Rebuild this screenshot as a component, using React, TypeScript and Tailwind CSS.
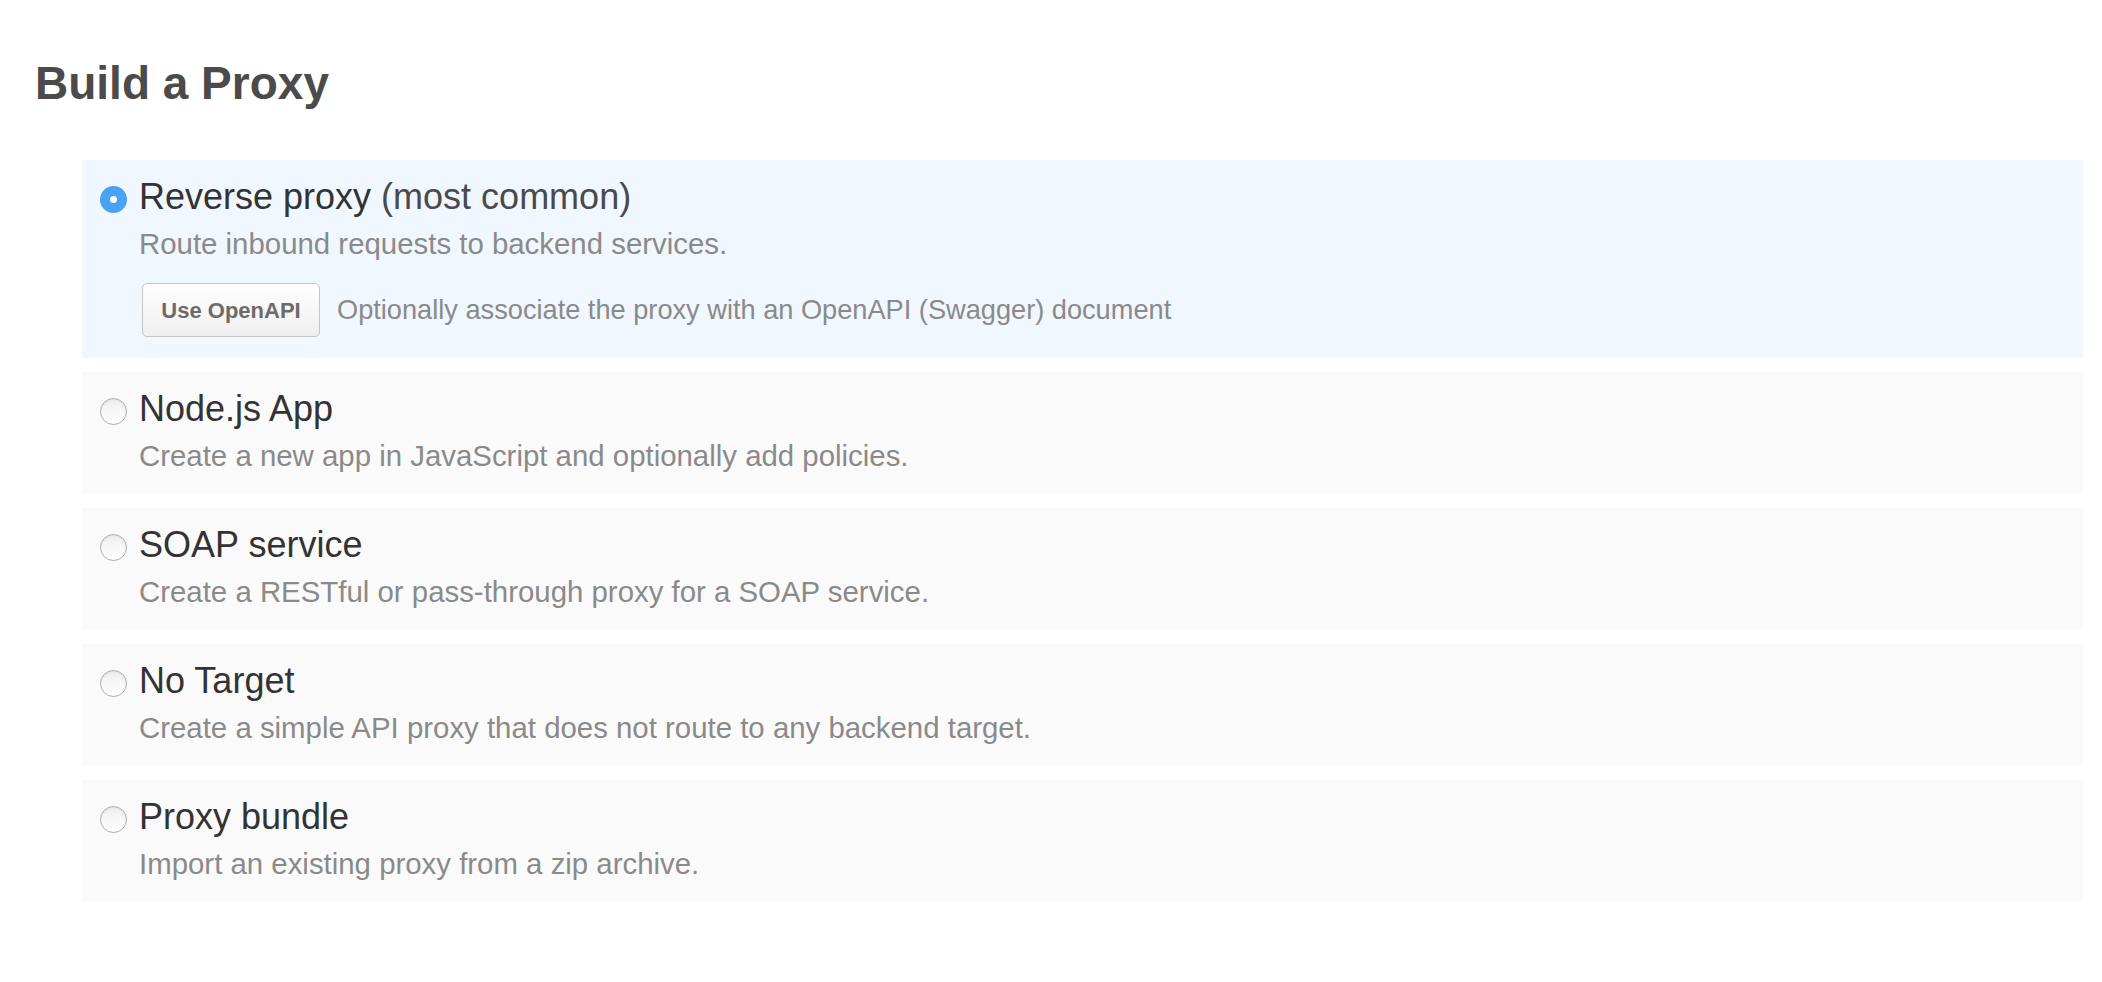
import React from "react";

type Opt = {
  title: string;
  suffix?: string;
  desc: string;
  checked?: boolean;
  openapi?: boolean;
};

const options: Opt[] = [
  {
    title: "Reverse proxy",
    suffix: "(most common)",
    desc: "Route inbound requests to backend services.",
    checked: true,
    openapi: true,
  },
  { title: "Node.js App", desc: "Create a new app in JavaScript and optionally add policies." },
  { title: "SOAP service", desc: "Create a RESTful or pass-through proxy for a SOAP service." },
  { title: "No Target", desc: "Create a simple API proxy that does not route to any backend target." },
  { title: "Proxy bundle", desc: "Import an existing proxy from a zip archive." },
];

function Radio({ checked }: { checked?: boolean }) {
  if (checked) {
    return (
      <div className="mt-[9px] flex h-[27px] w-[27px] shrink-0 items-center justify-center rounded-full bg-[#4aa2f6]">
        <div className="h-[7px] w-[7px] rounded-full bg-white" />
      </div>
    );
  }
  return (
    <div className="mt-[9px] h-[27px] w-[27px] shrink-0 rounded-full border border-[#acacac] bg-gradient-to-b from-[#f0f0f0] to-white shadow-[inset_0_1px_2px_rgba(0,0,0,0.08)]" />
  );
}

export default function App() {
  return (
    <div
      className="min-h-screen bg-white pb-10"
      style={{ fontFamily: '"Liberation Sans", Arial, sans-serif' }}
    >
      <h1 className="pl-[35px] pt-[60px] text-[46px] font-bold leading-[46px] tracking-[0px] text-[#4b4b4b]">
        Build a Proxy
      </h1>
      <div className="mt-[54px] flex flex-col gap-[14px] pl-[82px] pr-[19px]">
        {options.map((o) => (
          <div
            key={o.title}
            className={`flex gap-[12px] px-[18px] pt-[17px] ${
              o.checked ? "bg-[#f0f7fe] pb-[21px]" : "bg-[#fafafa] pb-[20px]"
            }`}
          >
            <Radio checked={o.checked} />
            <div className="flex flex-col">
              <div className="text-[36px] leading-[40px] text-[#333333]">
                {o.title}
                {o.suffix && <span className="text-[#4a4a4a]"> {o.suffix}</span>}
              </div>
              <div className="mt-[9px] text-[29.4px] leading-[36px] text-[#8a8a8a]">{o.desc}</div>
              {o.openapi && (
                <div className="mt-[21px] flex items-center gap-[17px] pl-[3px]">
                  <button className="h-[54px] w-[178px] rounded-[5px] border border-[#c6c6c6] bg-gradient-to-b from-white to-[#efefef] text-[22px] font-bold text-[#6b6b6b]">
                    Use OpenAPI
                  </button>
                  <span className="text-[27.2px] text-[#8a8a8a]">
                    Optionally associate the proxy with an OpenAPI (Swagger) document
                  </span>
                </div>
              )}
            </div>
          </div>
        ))}
      </div>
    </div>
  );
}
